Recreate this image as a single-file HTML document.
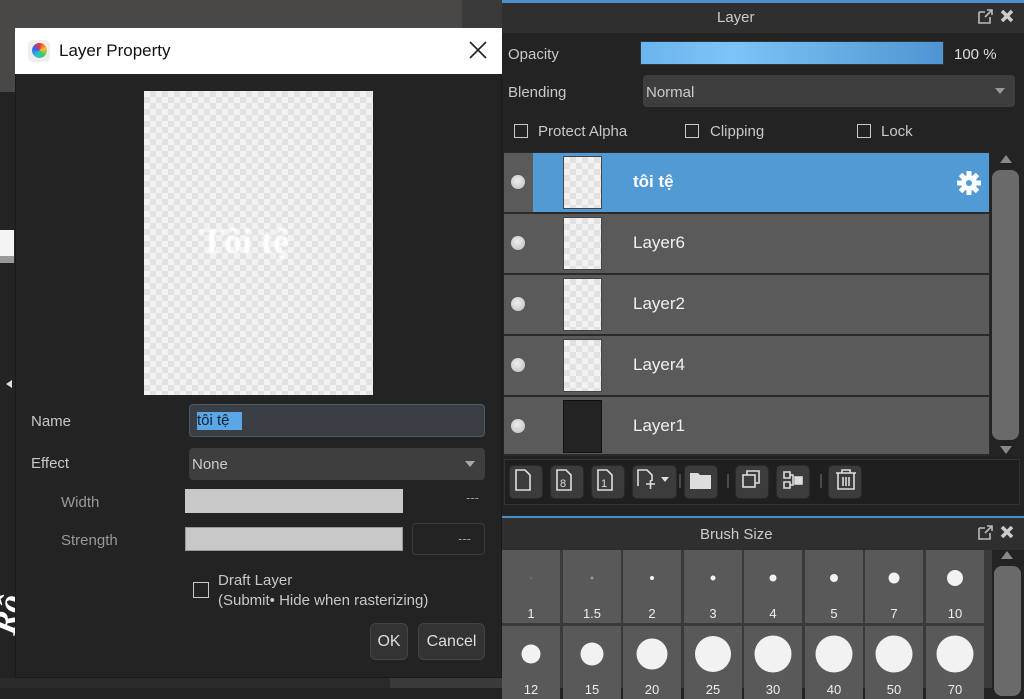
<!DOCTYPE html>
<html><head><meta charset="utf-8"><style>
*{margin:0;padding:0;box-sizing:border-box}
body{width:1024px;height:688px;overflow:hidden;background:#232323;font-family:"Liberation Sans","DejaVu Sans",sans-serif;position:relative;color:#ddd}
.a{position:absolute}
.chk{background-color:#f2f2f2;background-image:linear-gradient(45deg,#e2e2e2 25%,transparent 25%,transparent 75%,#e2e2e2 75%),linear-gradient(45deg,#e2e2e2 25%,transparent 25%,transparent 75%,#e2e2e2 75%);background-size:12px 12px;background-position:0 0,6px 6px}
.lbl{font-size:15px;color:#c8c8c8}
.cb{width:14px;height:14px;border:1.5px solid #c8c8c8}
.row{position:absolute;left:504px;width:485px;height:59px;background:#5a5a5a}
.row .eye{position:absolute;left:7px;top:22px;width:14px;height:14px;border-radius:50%;background:radial-gradient(circle at 45% 40%,#eee,#bbb)}
.row .th{position:absolute;left:59px;top:3px;width:39px;height:53px;border:1px solid #444}
.row .nm{position:absolute;left:129px;top:19px;font-size:17px;color:#f0f0f0}
.tb{position:absolute;top:465px;height:34px;background:#3c3c3c;border-radius:5px;border:1px solid #2a2a2a}
.cell{position:absolute;width:58px;height:73px;background:#595959}
.cell .d{position:absolute;left:50%;top:28px;transform:translate(-50%,-50%);border-radius:50%;background:#f2f2f2}
.cell .n{position:absolute;width:100%;text-align:center;top:56px;font-size:13px;color:#eee}
</style></head><body>
<div class="a" style="left:0;top:0;width:502px;height:92px;background:#4a4846"></div>
<div class="a" style="left:462px;top:0;width:40px;height:30px;background:#3a3a3a"></div>
<div class="a" style="left:0;top:92px;width:15px;height:596px;background:#232323"></div>
<div class="a" style="left:0;top:230px;width:14px;height:26px;background:#f4f4f4"></div>
<div class="a" style="left:0;top:256px;width:14px;height:7px;background:#999"></div>
<div class="a" style="left:6px;top:380px;border:4px solid transparent;border-right:6px solid #ddd;border-left:0"></div>
<div class="a" style="left:-14px;top:630px;font-size:34px;color:#fff;font-style:italic;font-weight:bold;font-family:'Liberation Serif',serif;transform:rotate(-78deg);transform-origin:left top;white-space:nowrap">Rô</div>
<div class="a" style="left:15px;top:28px;width:487px;height:650px;background:#232323;border:1px solid #1a1a1a"></div>
<div class="a" style="left:0;top:678px;width:502px;height:10px;background:#2a2a2a"></div>
<div class="a" style="left:390px;top:678px;width:112px;height:10px;background:#3a3a3a"></div>
<div class="a" style="left:15px;top:28px;width:487px;height:46px;background:#fff"></div>
<div class="a" style="left:28px;top:40px;width:22px;height:22px;border-radius:5px;background:#eee"></div>
<div class="a" style="left:32px;top:43px;width:15px;height:15px;border-radius:50%;background:conic-gradient(#e33,#fb3,#3c6,#3bd,#36e,#e33)"></div>
<div class="a" style="left:59px;top:41px;font-size:17px;color:#111">Layer Property</div>
<svg class="a" style="left:469px;top:41px" width="18" height="18"><path d="M1 1L17 17M17 1L1 17" stroke="#222" stroke-width="1.6"/></svg>
<div class="a chk" style="left:144px;top:91px;width:229px;height:304px"></div>
<div class="a" style="left:200px;top:220px;font-size:36px;font-weight:bold;color:#fff;font-family:'Liberation Serif',serif;filter:blur(1px)">Tôi tệ</div>
<div class="a lbl" style="left:31px;top:413px">Name</div>
<div class="a" style="left:189px;top:404px;width:296px;height:33px;background:#3a3f45;border:1px solid #4a5a6a;border-radius:4px"></div>
<div class="a" style="left:197px;top:412px;width:45px;height:18px;background:#5aa6e6"></div>
<div class="a" style="left:197px;top:412px;font-size:15px;color:#123">tôi tệ</div>
<div class="a lbl" style="left:31px;top:455px">Effect</div>
<div class="a" style="left:189px;top:448px;width:296px;height:32px;background:#3e3e3e;border-radius:4px"></div>
<div class="a" style="left:192px;top:456px;font-size:15px;color:#ccc">None</div>
<div class="a" style="left:465px;top:461px;border:5px solid transparent;border-top:6px solid #aaa"></div>
<div class="a lbl" style="left:61px;top:494px;color:#999">Width</div>
<div class="a" style="left:185px;top:489px;width:218px;height:24px;background:#c8c8c8"></div>
<div class="a" style="left:466px;top:490px;color:#999;font-size:13px">---</div>
<div class="a lbl" style="left:61px;top:532px;color:#999">Strength</div>
<div class="a" style="left:185px;top:527px;width:218px;height:24px;background:#c8c8c8;border:1px solid #999"></div>
<div class="a" style="left:412px;top:523px;width:73px;height:32px;border:1px solid #3a3a3a;border-radius:4px"></div>
<div class="a" style="left:458px;top:531px;color:#999;font-size:13px">---</div>
<div class="a cb" style="left:193px;top:582px;width:16px;height:16px"></div>
<div class="a lbl" style="left:218px;top:571px;line-height:20px">Draft Layer<br>(Submit• Hide when rasterizing)</div>
<div class="a" style="left:370px;top:623px;width:38px;height:37px;background:#333;border:1px solid #444;border-radius:6px;font-size:16px;text-align:center;line-height:35px;color:#ddd">OK</div>
<div class="a" style="left:418px;top:623px;width:67px;height:37px;background:#333;border:1px solid #444;border-radius:6px;font-size:16px;text-align:center;line-height:35px;color:#ddd">Cancel</div>
<div class="a" style="left:502px;top:0;width:522px;height:688px;background:#232323"></div>
<div class="a" style="left:502px;top:0;width:522px;height:3px;background:#4d8fc7"></div>
<div class="a" style="left:502px;top:3px;width:522px;height:30px;background:#2f2f2f"></div>
<div class="a" style="left:717px;top:9px;font-size:15px;color:#ccc">Layer</div>
<svg class="a" style="left:977px;top:7px" width="40" height="18"><path d="M2 5h6M2 5v11h11v-6" stroke="#bbb" stroke-width="1.6" fill="none"/><path d="M8 10L14 4M10 3h5v5" stroke="#bbb" stroke-width="1.6" fill="none"/><path d="M25 4L35 14M35 4L25 14" stroke="#ccc" stroke-width="3.5"/></svg>
<div class="a lbl" style="left:508px;top:46px">Opacity</div>
<div class="a" style="left:640px;top:41px;width:304px;height:24px;background:linear-gradient(90deg,#6bb4ee,#7cc4f6 30%,#4f95d2);border:1px solid #333"></div>
<div class="a lbl" style="left:954px;top:46px;color:#ddd">100 %</div>
<div class="a lbl" style="left:508px;top:84px">Blending</div>
<div class="a" style="left:643px;top:75px;width:372px;height:32px;background:#3e3e3e;border-radius:4px"></div>
<div class="a" style="left:646px;top:84px;font-size:15px;color:#ccc">Normal</div>
<div class="a" style="left:995px;top:88px;border:5px solid transparent;border-top:6px solid #999"></div>
<div class="a cb" style="left:514px;top:124px"></div><div class="a lbl" style="left:538px;top:123px">Protect Alpha</div>
<div class="a cb" style="left:685px;top:124px"></div><div class="a lbl" style="left:710px;top:123px">Clipping</div>
<div class="a cb" style="left:857px;top:124px"></div><div class="a lbl" style="left:881px;top:123px">Lock</div>
<div class="a" style="left:504px;top:152px;width:486px;height:304px;background:#2a2a2a"></div>
<div class="row" style="top:153px;background:#5a5a5a"><div style="position:absolute;left:29px;top:0;width:456px;height:59px;background:#519ad4"></div><div class="eye"></div><div class="th chk"></div><div class="nm" style="font-weight:bold;color:#fff">tôi tệ</div>
<svg style="position:absolute;left:452px;top:17px" width="26" height="26" viewBox="-13 -13 26 26"><g fill="#fff"><circle r="8"/><rect x="-2.5" y="-12" width="5" height="24"/><rect x="-2.5" y="-12" width="5" height="24" transform="rotate(45)"/><rect x="-2.5" y="-12" width="5" height="24" transform="rotate(90)"/><rect x="-2.5" y="-12" width="5" height="24" transform="rotate(135)"/></g><circle r="3" fill="#519ad4"/></svg></div>
<div class="row" style="top:214px"><div class="eye"></div><div class="th chk"></div><div class="nm">Layer6</div></div>
<div class="row" style="top:275px"><div class="eye"></div><div class="th chk"></div><div class="nm">Layer2</div></div>
<div class="row" style="top:336px"><div class="eye"></div><div class="th chk"></div><div class="nm">Layer4</div></div>
<div class="row" style="top:397px;height:57px"><div class="eye"></div><div class="th" style="background:#232323;border-color:#111"></div><div class="nm">Layer1</div></div>
<div class="a" style="left:1000px;top:155px;border:6px solid transparent;border-bottom:8px solid #888;border-top:0"></div>
<div class="a" style="left:992px;top:170px;width:27px;height:270px;background:#6a6a6a;border-radius:8px"></div>
<div class="a" style="left:1000px;top:446px;border:6px solid transparent;border-top:8px solid #888;border-bottom:0"></div>
<div class="a" style="left:504px;top:459px;width:516px;height:46px;border:1px solid #333;background:#1f1f1f"></div>
<div class="tb" style="left:509px;width:34px"></div>
<div class="tb" style="left:550px;width:34px"></div>
<div class="tb" style="left:591px;width:34px"></div>
<div class="tb" style="left:632px;width:45px"></div>
<div class="tb" style="left:684px;width:34px"></div>
<div class="tb" style="left:735px;width:34px"></div>
<div class="tb" style="left:776px;width:34px"></div>
<div class="tb" style="left:828px;width:34px"></div>
<svg class="a" style="left:504px;top:460px" width="370" height="44" fill="none" stroke="#ddd" stroke-width="1.6">
<path d="M12 10h9l5 5v15h-14z"/>
<path d="M53 10h9l5 5v15h-14z"/><text x="56" y="27" font-size="11" fill="#ddd" stroke="none" font-family="Liberation Sans">8</text>
<path d="M94 10h9l5 5v15h-14z"/><text x="97" y="27" font-size="11" fill="#ddd" stroke="none" font-family="Liberation Sans">1</text>
<path d="M134 26v-16h9l5 5v6M142 24h9M146.5 20v9"/><path d="M157 17h8l-4 5z" fill="#ddd" stroke="none"/>
<path d="M186 13h8l2 2h11v14h-21z" fill="#ddd" stroke="none"/>
<path d="M176 14v14M224 14v14" stroke="#555"/>
<rect x="239" y="15" width="12" height="12"/><path d="M243 15v-4h12v12h-4"/>
<path d="M280 12h6v6h-6zM280 22h6v6h-6zM286 15h3v10h-3"/><rect x="291" y="17" width="7" height="7" fill="#ddd"/>
<path d="M317 14v14" stroke="#555"/>
<path d="M332 13h20M338 13v-3h8v3M334 13v16h16v-16M339 17v9M342 17v9M345 17v9"/>
</svg>
<div class="a" style="left:502px;top:516px;width:522px;height:2px;background:#4d8fc7"></div>
<div class="a" style="left:502px;top:518px;width:522px;height:32px;background:#2f2f2f"></div>
<div class="a" style="left:700px;top:526px;font-size:15px;color:#ccc">Brush Size</div>
<svg class="a" style="left:977px;top:523px" width="40" height="18"><path d="M2 5h6M2 5v11h11v-6" stroke="#bbb" stroke-width="1.6" fill="none"/><path d="M8 10L14 4M10 3h5v5" stroke="#bbb" stroke-width="1.6" fill="none"/><path d="M25 4L35 14M35 4L25 14" stroke="#ccc" stroke-width="3.5"/></svg>
<div class="a" style="left:502px;top:550px;width:490px;height:138px;background:#3a3a3a"></div>
<div class="cell" style="left:502px;top:550px"><div class="d" style="width:2px;height:2px;background:#777"></div><div class="n">1</div></div>
<div class="cell" style="left:563px;top:550px"><div class="d" style="width:3px;height:3px;background:#999"></div><div class="n">1.5</div></div>
<div class="cell" style="left:623px;top:550px"><div class="d" style="width:4px;height:4px"></div><div class="n">2</div></div>
<div class="cell" style="left:684px;top:550px"><div class="d" style="width:5px;height:5px"></div><div class="n">3</div></div>
<div class="cell" style="left:744px;top:550px"><div class="d" style="width:7px;height:7px"></div><div class="n">4</div></div>
<div class="cell" style="left:805px;top:550px"><div class="d" style="width:8px;height:8px"></div><div class="n">5</div></div>
<div class="cell" style="left:865px;top:550px"><div class="d" style="width:11px;height:11px"></div><div class="n">7</div></div>
<div class="cell" style="left:926px;top:550px"><div class="d" style="width:16px;height:16px"></div><div class="n">10</div></div>
<div class="cell" style="left:502px;top:626px"><div class="d" style="width:19px;height:19px"></div><div class="n">12</div></div>
<div class="cell" style="left:563px;top:626px"><div class="d" style="width:23px;height:23px"></div><div class="n">15</div></div>
<div class="cell" style="left:623px;top:626px"><div class="d" style="width:31px;height:31px"></div><div class="n">20</div></div>
<div class="cell" style="left:684px;top:626px"><div class="d" style="width:36px;height:36px"></div><div class="n">25</div></div>
<div class="cell" style="left:744px;top:626px"><div class="d" style="width:37px;height:37px"></div><div class="n">30</div></div>
<div class="cell" style="left:805px;top:626px"><div class="d" style="width:37px;height:37px"></div><div class="n">40</div></div>
<div class="cell" style="left:865px;top:626px"><div class="d" style="width:37px;height:37px"></div><div class="n">50</div></div>
<div class="cell" style="left:926px;top:626px"><div class="d" style="width:37px;height:37px"></div><div class="n">70</div></div>
<div class="a" style="left:1001px;top:551px;border:6px solid transparent;border-bottom:8px solid #888;border-top:0"></div>
<div class="a" style="left:994px;top:566px;width:27px;height:130px;background:#6a6a6a;border-radius:8px"></div>
</body></html>
